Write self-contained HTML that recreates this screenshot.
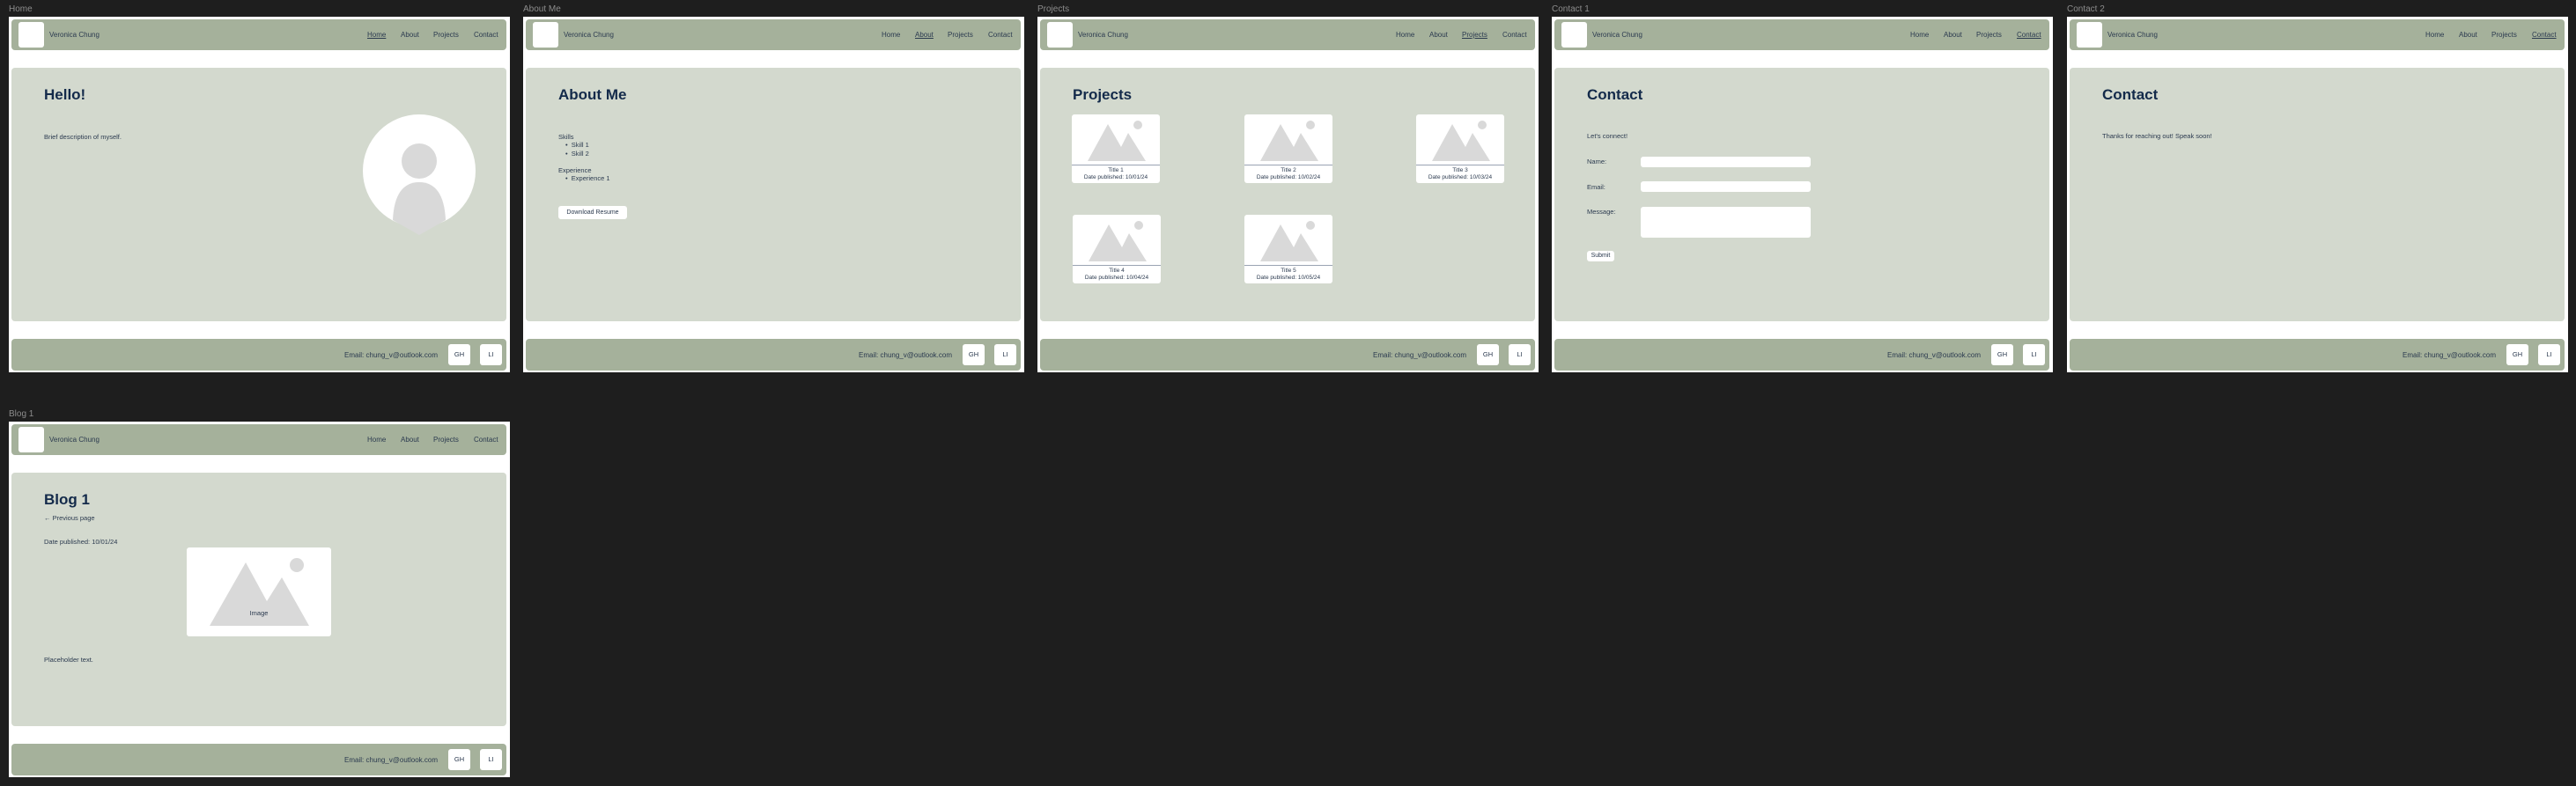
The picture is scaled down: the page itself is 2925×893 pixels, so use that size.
<!DOCTYPE html>
<html><head><meta charset="utf-8"><style>
*{margin:0;padding:0;box-sizing:border-box}
body{width:2925px;height:893px;background:#1e1e1e;position:relative;overflow:hidden;font-family:"Liberation Sans",sans-serif;color:#2b3a4f}
.lbl{position:absolute;font-size:10px;color:#8c8c8c;line-height:12px}
.fr{position:absolute;width:569px;height:404px;background:#fff}
.nav{position:absolute;left:3px;top:3px;width:562px;height:35px;background:#a5b19b;border-radius:4px}
.logo{position:absolute;left:8px;top:3px;width:29px;height:29px;background:#fff;border-radius:3px}
.nm{position:absolute;left:43px;top:13px;font-size:8px;line-height:9px}
.lk{position:absolute;top:13px;font-size:8px;line-height:9px}
.lk.a{text-decoration:underline}
.main{position:absolute;left:3px;top:58px;width:562px;height:288px;background:#d3d9ce;border-radius:4px}
.foot{position:absolute;left:3px;top:366px;width:562px;height:36px;background:#a5b19b;border-radius:4px}
.em{position:absolute;right:78px;top:14px;font-size:8px;line-height:9px}
.sb{position:absolute;top:6px;width:25px;height:24px;background:#fff;border-radius:3px;font-size:7.5px;line-height:24px;text-align:center}
.h{position:absolute;left:37px;top:21px;font-size:17px;font-weight:bold;color:#132a4a;line-height:20px}
.t{position:absolute;left:37px;font-size:7.5px;line-height:9px;white-space:nowrap}
.card{position:absolute;width:100px;height:78px;background:#fff;border-radius:3px}
.card .ln{position:absolute;left:0;top:57px;width:100px;height:1px;background:#9aa3b3}
.card .c1{position:absolute;top:60px;width:100px;text-align:center;font-size:6.5px;line-height:8px}
.inp{position:absolute;left:98px;width:193px;background:#fff;border-radius:3px}
.btn{position:absolute;background:#fff;border-radius:3px;font-size:7px;line-height:15px;text-align:center}
</style></head><body>

<div class="lbl" style="left:10px;top:5px">Home</div>
<div class="lbl" style="left:594px;top:5px">About Me</div>
<div class="lbl" style="left:1178px;top:5px">Projects</div>
<div class="lbl" style="left:1762px;top:5px">Contact 1</div>
<div class="lbl" style="left:2347px;top:5px">Contact 2</div>
<div class="lbl" style="left:10px;top:465px">Blog 1</div>

<!-- HOME -->
<div class="fr" style="left:10px;top:19px">
 <div class="nav"><div class="logo"></div><div class="nm">Veronica Chung</div>
  <div class="lk a" style="left:404px">Home</div><div class="lk" style="left:442px">About</div><div class="lk" style="left:479px">Projects</div><div class="lk" style="left:525px">Contact</div></div>
 <div class="main">
  <div class="h">Hello!</div>
  <div class="t" style="top:74px">Brief description of myself.</div>
  <svg style="position:absolute;left:399px;top:53px" width="130" height="140" viewBox="0 0 130 140">
   <circle cx="64" cy="64" r="64" fill="#fff"/>
   <circle cx="64" cy="53" r="20" fill="#d9d9d9"/>
   <path d="M34,120 Q36,77 64,77 Q92,77 94,120 L64,137 Z" fill="#d9d9d9"/>
  </svg>
 </div>
 <div class="foot"><div class="em">Email: chung_v@outlook.com</div><div class="sb" style="left:496px">GH</div><div class="sb" style="left:532px">LI</div></div>
</div>

<!-- ABOUT -->
<div class="fr" style="left:594px;top:19px">
 <div class="nav"><div class="logo"></div><div class="nm">Veronica Chung</div>
  <div class="lk" style="left:404px">Home</div><div class="lk a" style="left:442px">About</div><div class="lk" style="left:479px">Projects</div><div class="lk" style="left:525px">Contact</div></div>
 <div class="main">
  <div class="h">About Me</div>
  <div class="t" style="top:74px">Skills</div>
  <div class="t" style="top:83px;left:45px">•&nbsp; Skill 1</div>
  <div class="t" style="top:93px;left:45px">•&nbsp; Skill 2</div>
  <div class="t" style="top:112px">Experience</div>
  <div class="t" style="top:121px;left:45px">•&nbsp; Experience 1</div>
  <div class="btn" style="left:37px;top:157px;width:78px">Download Resume</div>
 </div>
 <div class="foot"><div class="em">Email: chung_v@outlook.com</div><div class="sb" style="left:496px">GH</div><div class="sb" style="left:532px">LI</div></div>
</div>

<!-- PROJECTS -->
<div class="fr" style="left:1178px;top:19px">
 <div class="nav"><div class="logo"></div><div class="nm">Veronica Chung</div>
  <div class="lk" style="left:404px">Home</div><div class="lk" style="left:442px">About</div><div class="lk a" style="left:479px">Projects</div><div class="lk" style="left:525px">Contact</div></div>
 <div class="main">
  <div class="h">Projects</div>
  <div class="card" style="left:36px;top:53px"><svg width="100" height="57"><path d="M18,53 L41,11 L56,37 L64,21 L84,53 Z" fill="#d9d9d9"/><circle cx="75" cy="12" r="5" fill="#d9d9d9"/></svg><div class="ln"></div><div class="c1">Title 1<br>Date published: 10/01/24</div></div>
  <div class="card" style="left:232px;top:53px"><svg width="100" height="57"><path d="M18,53 L41,11 L56,37 L64,21 L84,53 Z" fill="#d9d9d9"/><circle cx="75" cy="12" r="5" fill="#d9d9d9"/></svg><div class="ln"></div><div class="c1">Title 2<br>Date published: 10/02/24</div></div>
  <div class="card" style="left:427px;top:53px"><svg width="100" height="57"><path d="M18,53 L41,11 L56,37 L64,21 L84,53 Z" fill="#d9d9d9"/><circle cx="75" cy="12" r="5" fill="#d9d9d9"/></svg><div class="ln"></div><div class="c1">Title 3<br>Date published: 10/03/24</div></div>
  <div class="card" style="left:37px;top:167px"><svg width="100" height="57"><path d="M18,53 L41,11 L56,37 L64,21 L84,53 Z" fill="#d9d9d9"/><circle cx="75" cy="12" r="5" fill="#d9d9d9"/></svg><div class="ln"></div><div class="c1">Title 4<br>Date published: 10/04/24</div></div>
  <div class="card" style="left:232px;top:167px"><svg width="100" height="57"><path d="M18,53 L41,11 L56,37 L64,21 L84,53 Z" fill="#d9d9d9"/><circle cx="75" cy="12" r="5" fill="#d9d9d9"/></svg><div class="ln"></div><div class="c1">Title 5<br>Date published: 10/05/24</div></div>
 </div>
 <div class="foot"><div class="em">Email: chung_v@outlook.com</div><div class="sb" style="left:496px">GH</div><div class="sb" style="left:532px">LI</div></div>
</div>

<!-- CONTACT 1 -->
<div class="fr" style="left:1762px;top:19px">
 <div class="nav"><div class="logo"></div><div class="nm">Veronica Chung</div>
  <div class="lk" style="left:404px">Home</div><div class="lk" style="left:442px">About</div><div class="lk" style="left:479px">Projects</div><div class="lk a" style="left:525px">Contact</div></div>
 <div class="main">
  <div class="h">Contact</div>
  <div class="t" style="top:73px">Let's connect!</div>
  <div class="t" style="top:102px">Name:</div><div class="inp" style="top:101px;height:12px"></div>
  <div class="t" style="top:131px">Email:</div><div class="inp" style="top:129px;height:12px"></div>
  <div class="t" style="top:159px">Message:</div><div class="inp" style="top:158px;height:35px"></div>
  <div class="btn" style="left:37px;top:208px;width:31px;height:12px;line-height:12px">Submit</div>
 </div>
 <div class="foot"><div class="em">Email: chung_v@outlook.com</div><div class="sb" style="left:496px">GH</div><div class="sb" style="left:532px">LI</div></div>
</div>

<!-- CONTACT 2 -->
<div class="fr" style="left:2347px;top:19px">
 <div class="nav"><div class="logo"></div><div class="nm">Veronica Chung</div>
  <div class="lk" style="left:404px">Home</div><div class="lk" style="left:442px">About</div><div class="lk" style="left:479px">Projects</div><div class="lk a" style="left:525px">Contact</div></div>
 <div class="main">
  <div class="h">Contact</div>
  <div class="t" style="top:73px">Thanks for reaching out! Speak soon!</div>
 </div>
 <div class="foot"><div class="em">Email: chung_v@outlook.com</div><div class="sb" style="left:496px">GH</div><div class="sb" style="left:532px">LI</div></div>
</div>

<!-- BLOG 1 -->
<div class="fr" style="left:10px;top:479px">
 <div class="nav"><div class="logo"></div><div class="nm">Veronica Chung</div>
  <div class="lk" style="left:404px">Home</div><div class="lk" style="left:442px">About</div><div class="lk" style="left:479px">Projects</div><div class="lk" style="left:525px">Contact</div></div>
 <div class="main">
  <div class="h">Blog 1</div>
  <div class="t" style="top:47px">← Previous page</div>
  <div class="t" style="top:74px">Date published: 10/01/24</div>
  <div style="position:absolute;left:199px;top:85px;width:164px;height:101px;background:#fff;border-radius:3px">
   <svg width="164" height="101" style="position:absolute;left:0;top:0"><path d="M26,89 L67,17 L91,61 L108,34 L139,89 Z" fill="#d9d9d9"/><circle cx="125" cy="20" r="8" fill="#d9d9d9"/></svg>
   <div style="position:absolute;left:0;top:70px;width:164px;text-align:center;font-size:7.5px;line-height:9px">Image</div>
  </div>
  <div class="t" style="top:208px">Placeholder text.</div>
 </div>
 <div class="foot"><div class="em">Email: chung_v@outlook.com</div><div class="sb" style="left:496px">GH</div><div class="sb" style="left:532px">LI</div></div>
</div>

</body></html>
